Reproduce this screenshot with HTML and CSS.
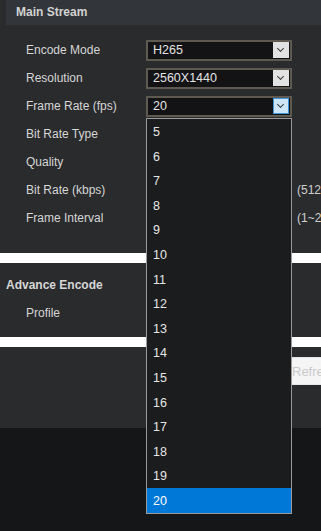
FILE: index.html
```html
<!DOCTYPE html>
<html lang="en">
<head>
    <meta charset="UTF-8">
    <meta name="viewport" content="width=device-width, initial-scale=1.0">
    <title>Encode Settings</title>
    <link rel="stylesheet" href="styles.css">
</head>
<body>
    <div class="page">
        <div class="section-title">Main Stream</div>
        <div class="form">
            <div class="row">
                <label>Encode Mode</label>
                <div class="select"><span>H265</span><i class="arrow"></i></div>
            </div>
            <div class="row">
                <label>Resolution</label>
                <div class="select"><span>2560X1440</span><i class="arrow"></i></div>
            </div>
            <div class="row">
                <label>Frame Rate (fps)</label>
                <div class="select focused"><span>20</span><i class="arrow"></i></div>
            </div>
            <div class="row">
                <label>Bit Rate Type</label>
                <div class="select"><i class="arrow"></i></div>
            </div>
            <div class="row">
                <label>Quality</label>
                <div class="select"><i class="arrow"></i></div>
            </div>
            <div class="row">
                <label>Bit Rate (kbps)</label>
                <div class="select"></div>
                <span class="hint">(512~16384)</span>
            </div>
            <div class="row">
                <label>Frame Interval</label>
                <div class="select"></div>
                <span class="hint">(1~200)</span>
            </div>
        </div>
        <div class="band"></div>
        <div class="section-sub">Advance Encode</div>
        <div class="row profile">
            <label>Profile</label>
            <div class="select"><i class="arrow"></i></div>
        </div>
        <div class="band"></div>
        <div class="actions">
            <button class="btn">Refresh</button>
        </div>
    </div>
    <div class="footer"></div>

    <ul class="dropdown">
        <li>5</li>
        <li>6</li>
        <li>7</li>
        <li>8</li>
        <li>9</li>
        <li>10</li>
        <li>11</li>
        <li>12</li>
        <li>13</li>
        <li>14</li>
        <li>15</li>
        <li>16</li>
        <li>17</li>
        <li>18</li>
        <li>19</li>
        <li class="selected">20</li>
    </ul>
</body>
</html>
```

FILE: styles.css
```css
html, body {
    overflow: hidden;
}
body {
    font-family: "Liberation Sans", Arial, sans-serif;
    font-size: 12px;
    background-color: #151618;
    color: #d6d6d6;
    margin: 0;
    padding: 0;
    height: 531px;
}
.page {
    background-color: #2a2b2d;
    width: 321px;
}
.section-title {
    height: 25px;
    line-height: 25px;
    margin-left: 6px;
    padding-left: 10px;
    background-color: #323539;
    font-weight: bold;
    color: #d2d2d2;
}
.form {
    padding-top: 11px;
}
.row {
    display: flex;
    align-items: center;
    height: 28px;
    padding-left: 26px;
    white-space: nowrap;
}
.row label {
    width: 120px;
    flex-shrink: 0;
}
.select {
    box-sizing: border-box;
    width: 146px;
    height: 21px;
    flex-shrink: 0;
    display: flex;
    align-items: center;
    justify-content: space-between;
    padding-left: 5px;
    padding-right: 1px;
    border: 2px solid #5e5a52;
    background-color: #131315;
    color: #e4e4e4;
    font-size: 12.5px;
}
.arrow {
    box-sizing: border-box;
    width: 16px;
    height: 16px;
    margin-left: auto;
    background-color: #e2e2e2;
    position: relative;
}
.arrow::after {
    content: "";
    position: absolute;
    left: 5px;
    top: 4px;
    width: 4px;
    height: 4px;
    border-right: 1px solid #3a3a3a;
    border-bottom: 1px solid #3a3a3a;
    transform: rotate(45deg);
}
.focused .arrow {
    background-color: #cce6f8;
    border: 1px solid #3d95dc;
}
.focused .arrow::after {
    left: 4px;
    top: 3px;
}
.hint {
    margin-left: 5px;
    color: #d0d0d0;
}
.band {
    height: 10px;
    background-color: #ffffff;
    margin-top: 21px;
}
.section-sub {
    margin-top: 10px;
    height: 24px;
    line-height: 24px;
    padding-left: 6px;
    font-weight: bold;
    color: #d6d6d6;
}
.profile {
    margin-top: 2px;
}
.profile + .band {
    margin-top: 10px;
}
.actions {
    padding-top: 10px;
    padding-bottom: 43px;
    white-space: nowrap;
}
.btn {
    margin-left: 270px;
    height: 28px;
    padding: 0 21px;
    border: 1px solid #e6e6e6;
    background-color: #f5f5f5;
    color: #c9c9c9;
    font-family: "Liberation Sans", Arial, sans-serif;
    font-size: 13px;
}
.footer {
    height: 103px;
    background-color: #151618;
}
.dropdown {
    position: absolute;
    left: 146px;
    top: 118px;
    width: 144px;
    margin: 0;
    padding: 0;
    list-style: none;
    border: 1px solid #9a9a9a;
    background-color: #1b1c1e;
    font-size: 12.5px;
    color: #e6e6e6;
}
.dropdown li {
    height: 24.6px;
    box-sizing: border-box;
    padding-top: 2px;
    line-height: 22.6px;
    padding-left: 6px;
}
.dropdown .selected {
    background-color: #0078d7;
    color: #ffffff;
}
```
